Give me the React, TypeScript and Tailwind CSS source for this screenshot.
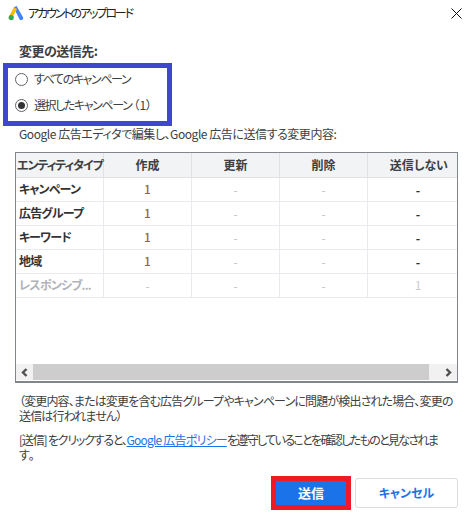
import React from "react";

const rows = [
  { name: "キャンペーン", c: "1", n: "-" },
  { name: "広告グループ", c: "1", n: "-" },
  { name: "キーワード", c: "1", n: "-" },
  { name: "地域", c: "1", n: "-" },
];

function Logo() {
  return (
    <svg width="16" height="16" viewBox="0 0 16 16" className="shrink-0">
      <path d="M5.6 2.6 L8.6 1 L15.2 12.4 A2.2 2.2 0 0 1 11.6 14.6 Z" fill="#4285f4" />
      <path d="M5.9 2.2 L9 4 L4.4 12.6 L1.2 11 Z" fill="#fbbc04" />
      <circle cx="3.2" cy="12.6" r="2.6" fill="#34a853" />
    </svg>
  );
}

function Radio({ checked, label, suffix }: { checked?: boolean; label: string; suffix?: string }) {
  return (
    <div className="flex items-center h-[14px] gap-[6px]">
      <span className="w-[13px] h-[13px] rounded-full border border-[#5f6368] flex items-center justify-center bg-white">
        {checked && <span className="w-[7px] h-[7px] rounded-full bg-[#333]" />}
      </span>
      <span className="text-[12px] text-[#3c4043] tracking-[-1.4px] whitespace-nowrap">
        {label}
        {suffix && <span className="tracking-[0px] pl-[2px]">{suffix}</span>}
      </span>
    </div>
  );
}

export default function App() {
  return (
    <div
      className="relative w-[471px] h-[522px] bg-white overflow-hidden text-[12px] text-[#3c4043] [font-feature-settings:'palt'] flex flex-col"
      style={{ fontFamily: '"Noto Sans CJK JP", "Noto Sans", sans-serif' }}
    >
      <header className="flex items-center h-[24px] mt-[1px] pl-[8px] pr-[9px] gap-[4px]">
        <Logo />
        <span className="text-[12px] text-[#222] tracking-[-2.1px]">アカウントのアップロード</span>
        <svg width="11" height="11" viewBox="0 0 11 11" className="ml-auto" stroke="#111" strokeWidth="1">
          <path d="M0.5 0.5 L10.5 10.5 M10.5 0.5 L0.5 10.5" />
        </svg>
      </header>

      <div className="pl-[19px] mt-[18px] font-bold text-[13px] leading-[16px] tracking-[-0.5px]">変更の送信先:</div>

      <div className="relative ml-[8px] mt-[9px] w-[159px] h-[53px] flex flex-col justify-start gap-[12px] pt-[4px] pl-[7px]">
        <Radio label="すべてのキャンペーン" />
        <Radio checked label="選択したキャンペーン" suffix="（1）" />
        <div className="absolute -left-[5px] -top-[5px] w-[169px] h-[63px] border-[5px] border-[#3f48cc]" />
      </div>

      <p className="pl-[19px] mt-[5px] leading-[16px] h-[18px] tracking-[-0.45px] whitespace-nowrap">Google 広告エディタで編集し、Google 広告に送信する変更内容:</p>

      <div className="ml-[15px] mt-[8px] w-[443px] h-[231px] border border-[#80868b] border-b-2 flex flex-col">
        <div className="flex-1">
          <div className="grid grid-cols-[88px_88px_88px_88px_89px] h-[25px] bg-[#f1f3f4] border-b border-[#dfe1e5] font-bold items-center text-[#3c4043]">
            <div className="h-full border-r border-[#dfe1e5] flex items-center whitespace-nowrap tracking-[-1.1px] pl-[1px]">エンティティタイプ</div>
            <div className="h-full border-r border-[#dfe1e5] flex items-center justify-center">作成</div>
            <div className="h-full border-r border-[#dfe1e5] flex items-center justify-center">更新</div>
            <div className="h-full border-r border-[#dfe1e5] flex items-center justify-center">削除</div>
            <div className="h-full flex items-center justify-end pr-[9px]">送信しない</div>
          </div>
          {rows.map((r) => (
            <div key={r.name} className="grid grid-cols-[88px_88px_88px_88px_89px] h-[24px] border-b border-[#e8eaed] items-center">
              <div className="h-full border-r border-[#e8eaed] flex items-center pl-[3px] pb-[1px] font-bold text-[#333] tracking-[-0.8px]">{r.name}</div>
              <div className="h-full border-r border-[#e8eaed] flex items-center justify-center pb-[1px] text-[#a0643c] font-medium">{r.c}</div>
              <div className="h-full border-r border-[#e8eaed] flex items-center justify-center text-[#bdc1c6]">-</div>
              <div className="h-full border-r border-[#e8eaed] flex items-center justify-center text-[#bdc1c6]">-</div>
              <div className="h-full flex items-center justify-center pl-[11px] font-bold text-[#333]">{r.n}</div>
            </div>
          ))}
          <div className="grid grid-cols-[88px_88px_88px_88px_89px] h-[24px] border-b border-[#e8eaed] items-center text-[#bdc1c6]">
            <div className="h-full border-r border-[#e8eaed] flex items-center pl-[3px] pb-[1px] font-bold text-[#b0b3b8] tracking-[-0.8px]">レスポンシブ...</div>
            <div className="h-full border-r border-[#e8eaed] flex items-center justify-center">-</div>
            <div className="h-full border-r border-[#e8eaed] flex items-center justify-center">-</div>
            <div className="h-full border-r border-[#e8eaed] flex items-center justify-center">-</div>
            <div className="h-full flex items-center justify-center pl-[11px] pb-[1px] text-[#c9ccd0]">1</div>
          </div>
        </div>
        <div className="h-[16px] flex items-center bg-[#f1f1f1] mb-[1px]">
          <div className="w-[17px] h-full flex items-center justify-center">
            <svg width="7" height="9" viewBox="0 0 7 9" fill="none" stroke="#505050" strokeWidth="2.4">
              <path d="M5.5 1 L2 4.5 L5.5 8" />
            </svg>
          </div>
          <div className="flex-1 h-full bg-[#cdcdcd]" />
          <div className="w-[28px] h-full flex items-center justify-end pr-[5px]">
            <svg width="7" height="9" viewBox="0 0 7 9" fill="none" stroke="#505050" strokeWidth="2.4">
              <path d="M1.5 1 L5 4.5 L1.5 8" />
            </svg>
          </div>
        </div>
      </div>

      <p className="pl-[19px] mt-[10px] leading-[15px] whitespace-nowrap tracking-[-0.85px]">
        （変更内容、または変更を含む広告グループやキャンペーンに問題が検出された場合、変更の
        <br />
        送信は行われません）
      </p>
      <p className="pl-[19px] mt-[9px] leading-[15px] whitespace-nowrap">
        <span className="tracking-[-1.2px]">[送信] をクリックすると、</span>
        <a className="text-[#1a73e8] underline tracking-[-0.8px]">Google 広告ポリシー</a>
        <span className="tracking-[-1.65px]">を遵守していることを確認したものと見なされま</span>
        <br />
        す。
      </p>

      <div className="ml-auto mt-[16px] mr-[13px] flex items-center gap-[9px]">
        <div className="relative w-[70px] h-[24px]">
          <button className="w-full h-full bg-[#1a73e8] text-white font-bold text-[13px]">送信</button>
          <div className="absolute -left-[5px] -top-[5px] w-[80px] h-[34px] border-[5px] border-[#ed1c24]" />
        </div>
        <button className="w-[103px] h-[30px] rounded-[3px] border border-[#dadce0] bg-white text-[#1a73e8] font-bold">キャンセル</button>
      </div>
    </div>
  );
}
